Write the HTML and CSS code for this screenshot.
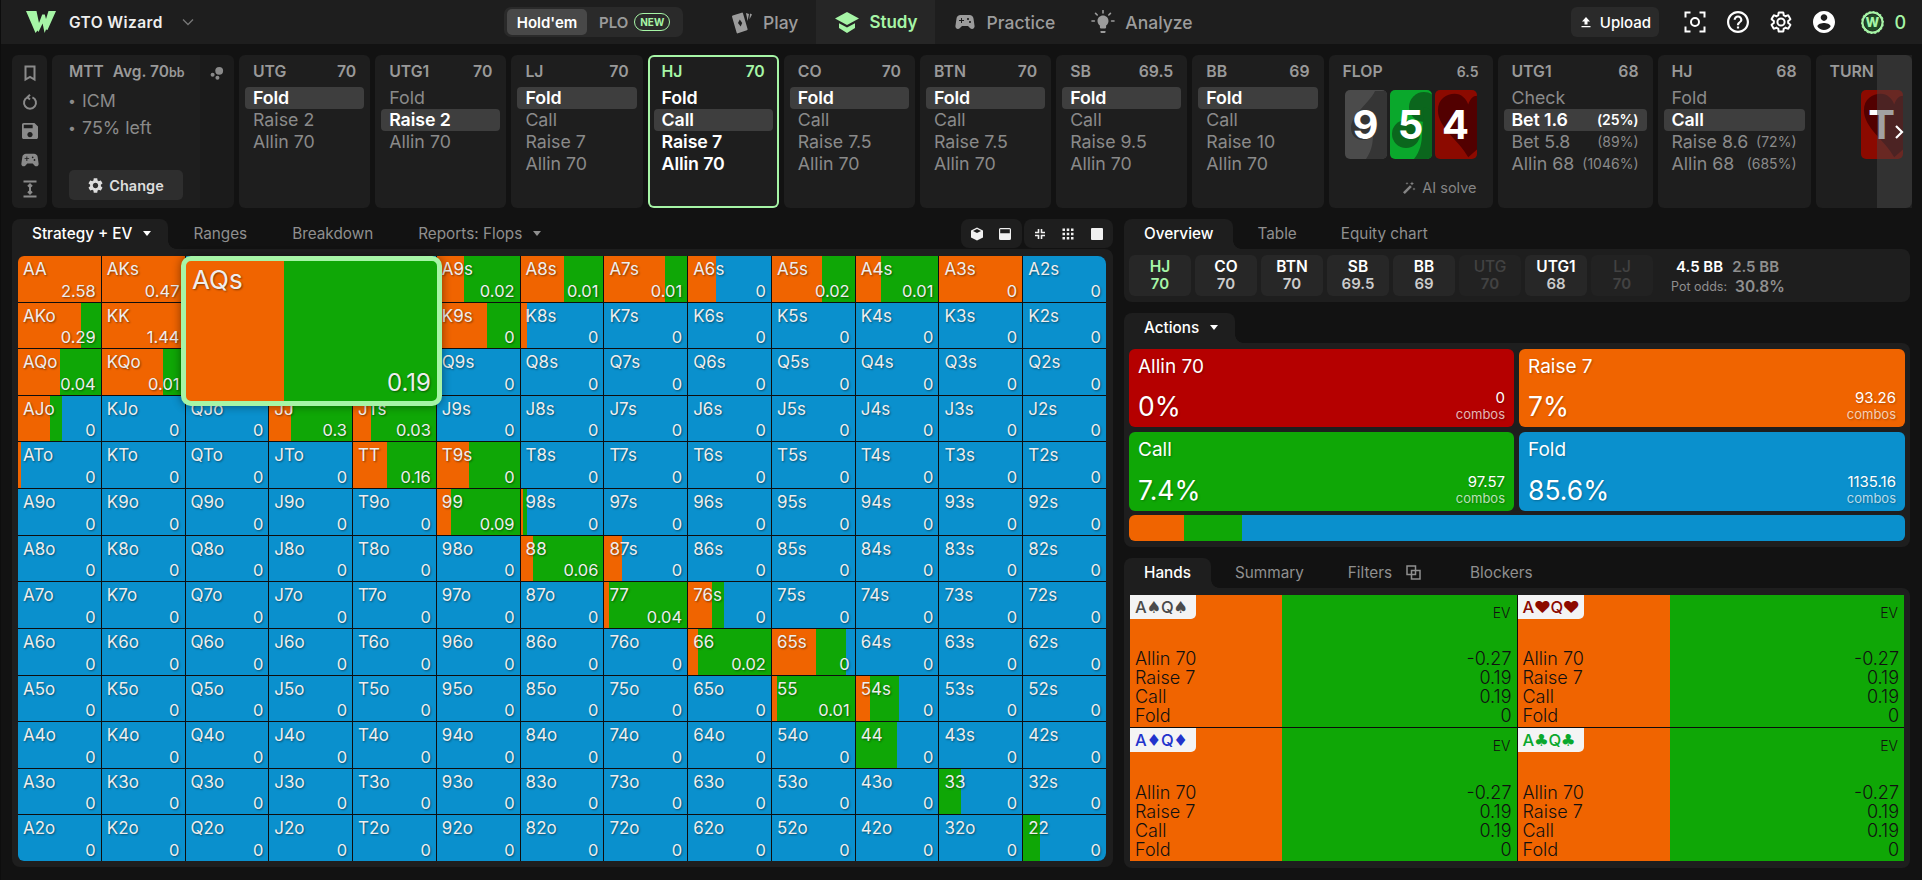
FILE: index.html
```html
<!DOCTYPE html>
<html lang="en">
<head>
<meta charset="utf-8">
<title>GTO Wizard</title>
<link rel="stylesheet" href="styles.css">
</head>
<body>
<div class="app">
  <header class="topbar">
    <svg class="logo" viewBox="0 0 30 22"><path d="M0 0H10.5L13 12 16.2 3.5H18.8L20 8 22.5 0H30L21.5 19 20 18.5 18.6 22 16.6 12.5 12.5 21 11.5 19.5 9.5 22 6.5 15Z"/></svg>
    <span class="brand">GTO Wizard</span>
    <svg class="chev" viewBox="0 0 12 8"><path d="M1 1.5 6 6.5 11 1.5"/></svg>
    <div class="toggle">
      <span class="toggle-on">Hold'em</span>
      <span class="toggle-off">PLO</span>
      <span class="new">NEW</span>
    </div>
    <nav class="nav">
      <a class="nav-item">
        <svg class="nav-ico" viewBox="0 0 24 24"><path d="M4 6.5 13 3.6 17.6 19.4 8.6 22.4Z" stroke-linejoin="round" stroke="currentColor" stroke-width="2"/><path d="M17 3 20 4 18.6 11Z" /><path d="M21 3.4 23 4.4 20.4 9.5Z"/><path class="nav-hole" d="M10.8 9.5 13.2 13 11.7 16.6 9 13Z"/></svg>
        <span>Play</span>
      </a>
      <a class="nav-item nav-on">
        <svg class="nav-ico study-ico" viewBox="0 0 26 24"><path d="M13 2 25 8.5 13 15 1 8.5Z"/><path d="M5 13.2 13 17.6 21 13.2V18L13 23 5 18Z"/></svg>
        <span>Study</span>
      </a>
      <a class="nav-item">
        <svg class="nav-ico pad-ico" viewBox="0 0 24 24"><path d="M21.58 16.09l-1.09-7.66C20.21 6.46 18.52 5 16.53 5H7.47C5.48 5 3.79 6.46 3.51 8.43l-1.09 7.66C2.2 17.63 3.39 19 4.94 19c.68 0 1.32-.27 1.8-.75L9 16h6l2.25 2.25c.48.48 1.13.75 1.8.75 1.56 0 2.75-1.37 2.53-2.91zM11 11H9v2H8v-2H6v-1h2V8h1v2h2v1zm4-1c-.55 0-1-.45-1-1s.45-1 1-1 1 .45 1 1-.45 1-1 1zm2 3c-.55 0-1-.45-1-1s.45-1 1-1 1 .45 1 1-.45 1-1 1z"/></svg>
        <span>Practice</span>
      </a>
      <a class="nav-item">
        <svg class="nav-ico" viewBox="0 0 24 24"><path d="M9.5 21h5v1.2c0 .5-.4.8-.8.8h-3.4c-.5 0-.8-.3-.8-.8zM12 5.5c-3 0-5.5 2.4-5.5 5.4 0 1.9 1 3.5 2.4 4.5v2.2c0 .5.4.8.8.8h4.6c.5 0 .8-.3.8-.8v-2.2c1.5-1 2.4-2.6 2.4-4.5 0-3-2.5-5.4-5.5-5.4z"/><path class="ray" d="M12 .6V3M4.6 3.4 6.2 5M19.4 3.4 17.8 5M1 11H3.4M20.6 11H23"/></svg>
        <span>Analyze</span>
      </a>
    </nav>
    <div class="top-right">
      <a class="upload">
        <svg class="up-ico" viewBox="0 0 12 12"><path d="M6 1 10 5.5H7.5V8.5H4.5V5.5H2ZM1.5 10H10.5V11.3H1.5Z"/></svg>
        Upload
      </a>
      <svg class="top-ico" viewBox="0 0 22 22"><path class="ico-line" d="M1.5 6.5V1.5H6.5M15.5 1.5H20.5V6.5M1.5 15.5V20.5H6.5M15.5 20.5H20.5V15.5"/><circle class="ico-line" cx="11" cy="11" r="4"/></svg>
      <svg class="top-ico" viewBox="2 2 20 20"><path d="M11 18h2v-2h-2v2zm1-16C6.48 2 2 6.48 2 12s4.48 10 10 10 10-4.48 10-10S17.52 2 12 2zm0 18c-4.41 0-8-3.59-8-8s3.59-8 8-8 8 3.59 8 8-3.59 8-8 8zm0-14c-2.21 0-4 1.79-4 4h2c0-1.1.9-2 2-2s2 .9 2 2c0 2-3 1.75-3 5h2c0-2.25 3-2.5 3-5 0-2.21-1.79-4-4-4z"/></svg>
      <svg class="top-ico" viewBox="1 1 22 22"><path class="ico-line" d="M19.14 12.94c.04-.3.06-.61.06-.94 0-.32-.02-.64-.07-.94l2.03-1.58c.18-.14.23-.41.12-.61l-1.92-3.32c-.12-.22-.37-.29-.59-.22l-2.39.96c-.5-.38-1.03-.7-1.62-.94l-.36-2.54c-.04-.24-.24-.41-.48-.41h-3.84c-.24 0-.43.17-.47.41l-.36 2.54c-.59.24-1.13.57-1.62.94l-2.39-.96c-.22-.08-.47 0-.59.22L2.74 8.87c-.12.21-.08.47.12.61l2.03 1.58c-.05.3-.09.63-.09.94s.02.64.07.94l-2.03 1.58c-.18.14-.23.41-.12.61l1.92 3.32c.12.22.37.29.59.22l2.39-.96c.5.38 1.03.7 1.62.94l.36 2.54c.05.24.24.41.48.41h3.84c.24 0 .44-.17.47-.41l.36-2.54c.59-.24 1.13-.56 1.62-.94l2.39.96c.22.08.47 0 .59-.22l1.92-3.32c.12-.22.07-.47-.12-.61l-2.01-1.58zM12 15.6c-1.98 0-3.6-1.62-3.6-3.6s1.62-3.6 3.6-3.6 3.6 1.62 3.6 3.6-1.62 3.6-3.6 3.6z"/></svg>
      <svg class="top-ico" viewBox="2 2 20 20"><path d="M12 2C6.48 2 2 6.48 2 12s4.48 10 10 10 10-4.48 10-10S17.52 2 12 2zm0 3c1.66 0 3 1.34 3 3s-1.34 3-3 3-3-1.34-3-3 1.34-3 3-3zm0 14.2c-2.5 0-4.71-1.28-6-3.22.03-1.99 4-3.08 6-3.08 1.99 0 5.97 1.09 6 3.08-1.29 1.94-3.5 3.22-6 3.22z"/></svg>
      <svg class="coin" viewBox="0 0 25 25"><circle class="coin-edge" cx="12.5" cy="12.5" r="11.5"/><circle class="coin-mid" cx="12.5" cy="12.5" r="8.5"/><text class="coin-w" x="12.5" y="17">W</text></svg>
      <span class="coin-n">0</span>
    </div>
  </header>

  <section class="strip">
    <div class="tools">
      <svg class="tool" viewBox="0 0 16 16"><path class="ico-line" d="M3.5 1.5H12.5V14.5L8 12 3.5 14.5Z"/></svg>
      <svg class="tool" viewBox="0 0 16 16"><path class="ico-line" d="M5.6 3.3A6 6 0 1 0 10.4 3.3M8 .8 5.4 3.3 8 5.6"/></svg>
      <svg class="tool" viewBox="3 3 18 18"><path d="M17 3H5c-1.11 0-2 .9-2 2v14c0 1.1.89 2 2 2h14c1.1 0 2-.9 2-2V7l-4-4zm-5 16c-1.66 0-3-1.34-3-3s1.34-3 3-3 3 1.34 3 3-1.34 3-3 3zm3-10H5V5h10v4z"/></svg>
      <svg class="tool tool-w" viewBox="2 4 20 16"><path d="M21.58 16.09l-1.09-7.66C20.21 6.46 18.52 5 16.53 5H7.47C5.48 5 3.79 6.46 3.51 8.43l-1.09 7.66C2.2 17.63 3.39 19 4.94 19c.68 0 1.32-.27 1.8-.75L9 16h6l2.25 2.25c.48.48 1.13.75 1.8.75 1.56 0 2.75-1.37 2.53-2.91zM11 11H9v2H8v-2H6v-1h2V8h1v2h2v1zm4-1c-.55 0-1-.45-1-1s.45-1 1-1 1 .45 1 1-.45 1-1 1zm2 3c-.55 0-1-.45-1-1s.45-1 1-1 1 .45 1 1-.45 1-1 1z"/></svg>
      <svg class="tool" viewBox="0 0 16 18"><path class="ico-line" d="M1.5 1.5H14.5M1.5 16.5H14.5M8 4.5V13.5M6 6.5 8 4.5 10 6.5M6 11.5 8 13.5 10 11.5"/></svg>
    </div>

    <div class="mtt">
      <div class="mtt-main">
        <div class="mtt-head"><span>MTT</span><span>Avg. 70<small>bb</small></span></div>
        <ul class="mtt-list"><li>ICM</li><li>75% left</li></ul>
        <a class="change">
          <svg class="change-ico" viewBox="2 2 20 20"><path d="M19.14 12.94c.04-.3.06-.61.06-.94 0-.32-.02-.64-.07-.94l2.03-1.58c.18-.14.23-.41.12-.61l-1.92-3.32c-.12-.22-.37-.29-.59-.22l-2.39.96c-.5-.38-1.03-.7-1.62-.94l-.36-2.54c-.04-.24-.24-.41-.48-.41h-3.84c-.24 0-.43.17-.47.41l-.36 2.54c-.59.24-1.13.57-1.62.94l-2.39-.96c-.22-.08-.47 0-.59.22L2.74 8.87c-.12.21-.08.47.12.61l2.03 1.58c-.05.3-.09.63-.09.94s.02.64.07.94l-2.03 1.58c-.18.14-.23.41-.12.61l1.92 3.32c.12.22.37.29.59.22l2.39-.96c.5.38 1.03.7 1.62.94l.36 2.54c.05.24.24.41.48.41h3.84c.24 0 .44-.17.47-.41l.36-2.54c.59-.24 1.13-.56 1.62-.94l2.39.96c.22.08.47 0 .59-.22l1.92-3.32c.12-.22.07-.47-.12-.61l-2.01-1.58zM12 15.6c-1.98 0-3.6-1.62-3.6-3.6s1.62-3.6 3.6-3.6 3.6 1.62 3.6 3.6-1.62 3.6-3.6 3.6z"/></svg>
          Change
        </a>
      </div>
      <div class="mtt-side">
        <svg class="dots" viewBox="0 0 16 16"><circle cx="10.5" cy="5.5" r="4.5"/><circle cx="3" cy="10" r="2.3"/><circle cx="8.5" cy="13.5" r="2.3"/></svg>
      </div>
    </div>

    <div class="seat">
      <div class="seat-h"><span>UTG</span><span>70</span></div>
      <div class="opt sel">Fold</div><div class="opt">Raise 2</div><div class="opt">Allin 70</div>
    </div>
    <div class="seat">
      <div class="seat-h"><span>UTG1</span><span>70</span></div>
      <div class="opt">Fold</div><div class="opt sel">Raise 2</div><div class="opt">Allin 70</div>
    </div>
    <div class="seat">
      <div class="seat-h"><span>LJ</span><span>70</span></div>
      <div class="opt sel">Fold</div><div class="opt">Call</div><div class="opt">Raise 7</div><div class="opt">Allin 70</div>
    </div>
    <div class="seat seat-on">
      <div class="seat-h"><span>HJ</span><span>70</span></div>
      <div class="opt">Fold</div><div class="opt sel">Call</div><div class="opt">Raise 7</div><div class="opt">Allin 70</div>
    </div>
    <div class="seat">
      <div class="seat-h"><span>CO</span><span>70</span></div>
      <div class="opt sel">Fold</div><div class="opt">Call</div><div class="opt">Raise 7.5</div><div class="opt">Allin 70</div>
    </div>
    <div class="seat">
      <div class="seat-h"><span>BTN</span><span>70</span></div>
      <div class="opt sel">Fold</div><div class="opt">Call</div><div class="opt">Raise 7.5</div><div class="opt">Allin 70</div>
    </div>
    <div class="seat">
      <div class="seat-h"><span>SB</span><span>69.5</span></div>
      <div class="opt sel">Fold</div><div class="opt">Call</div><div class="opt">Raise 9.5</div><div class="opt">Allin 70</div>
    </div>
    <div class="seat">
      <div class="seat-h"><span>BB</span><span>69</span></div>
      <div class="opt sel">Fold</div><div class="opt">Call</div><div class="opt">Raise 10</div><div class="opt">Allin 70</div>
    </div>

    <div class="seat flop">
      <div class="seat-h"><span>FLOP</span><span class="flop-pot">6.5</span></div>
      <div class="board">
        <div class="pcard pc-s">
          <svg viewBox="0 0 42 69"><path d="M30 1C24 14 6 24 6 38C6 47 13 50 18 50C22 50 26 48 28 45C28 54 26 62 21 69H42V1Z"/></svg>
          <b>9</b>
        </div>
        <div class="pcard pc-c">
          <svg viewBox="0 0 42 69"><circle cx="34" cy="17" r="15"/><circle cx="16" cy="44" r="14"/><path d="M34 17 42 20V69H24C30 62 32 52 32 44Z"/></svg>
          <b>5</b>
        </div>
        <div class="pcard pc-h">
          <svg viewBox="0 0 43 69"><path d="M34 68C24 50 3 38 3 20C3 8 12 3 20 3C27 3 32 8 34 14C36 8 39 5 43 5V60Z"/></svg>
          <b>4</b>
        </div>
      </div>
      <div class="ai">
        <svg class="ai-ico" viewBox="0 0 14 14"><path d="M1 11.2 8 4.2 9.8 6 2.8 13Z"/><path d="M10 .5 10.6 2 12 2.6 10.6 3.2 10 4.6 9.4 3.2 8 2.6 9.4 2ZM5 .8 5.4 2 6.6 2.4 5.4 2.8 5 4 4.6 2.8 3.4 2.4 4.6 2ZM12 6.5 12.4 7.6 13.6 8 12.4 8.4 12 9.5 11.6 8.4 10.4 8 11.6 7.6Z"/></svg>
        AI solve
      </div>
    </div>

    <div class="seat seat-utg1">
      <div class="seat-h"><span>UTG1</span><span>68</span></div>
      <div class="opt">Check</div>
      <div class="opt sel"><span>Bet 1.6</span><em>(25%)</em></div>
      <div class="opt"><span>Bet 5.8</span><em>(89%)</em></div>
      <div class="opt"><span>Allin 68</span><em>(1046%)</em></div>
    </div>
    <div class="seat seat-hj2">
      <div class="seat-h"><span>HJ</span><span>68</span></div>
      <div class="opt">Fold</div>
      <div class="opt sel">Call</div>
      <div class="opt"><span>Raise 8.6</span><em>(72%)</em></div>
      <div class="opt"><span>Allin 68</span><em>(685%)</em></div>
    </div>
    <div class="seat turn">
      <div class="seat-h"><span>TURN</span></div>
      <div class="board board-turn">
        <div class="pcard pc-h">
          <svg viewBox="0 0 43 69"><path d="M34 68C24 50 3 38 3 20C3 8 12 3 20 3C27 3 32 8 34 14C36 8 39 5 43 5V60Z"/></svg>
          <b>T</b>
        </div>
      </div>
    </div>
    <div class="more"><svg viewBox="0 0 10 16"><path d="M2 2 8 8 2 14"/></svg></div>
  </section>

  <main class="content">
    <section class="left">
      <div class="tabs">
        <a class="tab tab-on tab-caret">Strategy + EV<i class="caret"></i></a>
        <a class="tab">Ranges</a>
        <a class="tab">Breakdown</a>
        <a class="tab">Reports: Flops<i class="caret caret-dim"></i></a>
        <div class="view-tools">
          <div class="vgroup">
            <a class="vbtn"><svg viewBox="0 0 14 14"><path d="M7 .5 13 3.5V10.5L7 13.5 1 10.5V3.5ZM3 4 7 6 11 4 7 2Z" fill-rule="evenodd"/></svg></a>
            <a class="vbtn"><svg viewBox="0 0 14 14"><path d="M2.5 1H11.5A1.5 1.5 0 0 1 13 2.5V11.5A1.5 1.5 0 0 1 11.5 13H2.5A1.5 1.5 0 0 1 1 11.5V2.5A1.5 1.5 0 0 1 2.5 1ZM2.2 2.2V6.2H11.8V2.2Z" fill-rule="evenodd"/></svg></a>
          </div>
          <div class="vgroup">
            <a class="vbtn"><svg class="thin" viewBox="0 0 14 14"><path class="ico-line" d="M5.5 2V5.5H2M8.5 2V5.5H12M5.5 12V8.5H2M8.5 12V8.5H12"/></svg></a>
            <a class="vbtn"><svg viewBox="0 0 14 14"><path d="M1.5 1.5H4V4H1.5ZM5.75 1.5H8.25V4H5.75ZM10 1.5H12.5V4H10ZM1.5 5.75H4V8.25H1.5ZM5.75 5.75H8.25V8.25H5.75ZM10 5.75H12.5V8.25H10ZM1.5 10H4V12.5H1.5ZM5.75 10H8.25V12.5H5.75ZM10 10H12.5V12.5H10Z"/></svg></a>
            <a class="vbtn"><svg viewBox="0 0 14 14"><rect x="1" y="1" width="12" height="12" rx="1"/></svg></a>
          </div>
        </div>
      </div>
      <div class="panel panel-grid">
        <div class="matrix">
          <div class="grid">
            <div class="c or"><b>AA</b><span>2.58</span></div>
            <div class="c or"><b>AKs</b><span>0.47</span></div>
            <div class="c"></div>
            <div class="c"></div>
            <div class="c"></div>
            <div class="c" style="--o:33%;--g:100%"><b>A9s</b><span>0.02</span></div>
            <div class="c" style="--o:52%;--g:100%"><b>A8s</b><span>0.01</span></div>
            <div class="c" style="--o:74%;--g:100%"><b>A7s</b><span>0.01</span></div>
            <div class="c" style="--o:34%;--g:34%"><b>A6s</b><span>0</span></div>
            <div class="c" style="--o:60%;--g:100%"><b>A5s</b><span>0.02</span></div>
            <div class="c" style="--o:30%;--g:100%"><b>A4s</b><span>0.01</span></div>
            <div class="c or"><b>A3s</b><span>0</span></div>
            <div class="c"><b>A2s</b><span>0</span></div>

            <div class="c" style="--o:76%;--g:100%"><b>AKo</b><span>0.29</span></div>
            <div class="c or"><b>KK</b><span>1.44</span></div>
            <div class="c"></div>
            <div class="c"></div>
            <div class="c"></div>
            <div class="c" style="--o:60%;--g:100%"><b>K9s</b><span>0</span></div>
            <div class="c" style="--o:7%;--g:7%"><b>K8s</b><span>0</span></div>
            <div class="c"><b>K7s</b><span>0</span></div>
            <div class="c"><b>K6s</b><span>0</span></div>
            <div class="c"><b>K5s</b><span>0</span></div>
            <div class="c"><b>K4s</b><span>0</span></div>
            <div class="c"><b>K3s</b><span>0</span></div>
            <div class="c"><b>K2s</b><span>0</span></div>

            <div class="c" style="--o:50%;--g:100%"><b>AQo</b><span>0.04</span></div>
            <div class="c" style="--o:74%;--g:100%"><b>KQo</b><span>0.01</span></div>
            <div class="c"></div>
            <div class="c"></div>
            <div class="c"></div>
            <div class="c"><b>Q9s</b><span>0</span></div>
            <div class="c"><b>Q8s</b><span>0</span></div>
            <div class="c"><b>Q7s</b><span>0</span></div>
            <div class="c"><b>Q6s</b><span>0</span></div>
            <div class="c"><b>Q5s</b><span>0</span></div>
            <div class="c"><b>Q4s</b><span>0</span></div>
            <div class="c"><b>Q3s</b><span>0</span></div>
            <div class="c"><b>Q2s</b><span>0</span></div>

            <div class="c" style="--o:38%;--g:53%"><b>AJo</b><span>0</span></div>
            <div class="c"><b>KJo</b><span>0</span></div>
            <div class="c"><b>QJo</b><span>0</span></div>
            <div class="c" style="--o:26%;--g:100%"><b>JJ</b><span>0.3</span></div>
            <div class="c" style="--o:22%;--g:100%"><b>JTs</b><span>0.03</span></div>
            <div class="c"><b>J9s</b><span>0</span></div>
            <div class="c"><b>J8s</b><span>0</span></div>
            <div class="c"><b>J7s</b><span>0</span></div>
            <div class="c"><b>J6s</b><span>0</span></div>
            <div class="c"><b>J5s</b><span>0</span></div>
            <div class="c"><b>J4s</b><span>0</span></div>
            <div class="c"><b>J3s</b><span>0</span></div>
            <div class="c"><b>J2s</b><span>0</span></div>

            <div class="c" style="--o:4%;--g:4%"><b>ATo</b><span>0</span></div>
            <div class="c"><b>KTo</b><span>0</span></div>
            <div class="c"><b>QTo</b><span>0</span></div>
            <div class="c"><b>JTo</b><span>0</span></div>
            <div class="c" style="--o:41%;--g:100%"><b>TT</b><span>0.16</span></div>
            <div class="c" style="--o:38%;--g:100%"><b>T9s</b><span>0</span></div>
            <div class="c"><b>T8s</b><span>0</span></div>
            <div class="c"><b>T7s</b><span>0</span></div>
            <div class="c"><b>T6s</b><span>0</span></div>
            <div class="c"><b>T5s</b><span>0</span></div>
            <div class="c"><b>T4s</b><span>0</span></div>
            <div class="c"><b>T3s</b><span>0</span></div>
            <div class="c"><b>T2s</b><span>0</span></div>

            <div class="c"><b>A9o</b><span>0</span></div>
            <div class="c"><b>K9o</b><span>0</span></div>
            <div class="c"><b>Q9o</b><span>0</span></div>
            <div class="c"><b>J9o</b><span>0</span></div>
            <div class="c"><b>T9o</b><span>0</span></div>
            <div class="c" style="--o:17%;--g:100%"><b>99</b><span>0.09</span></div>
            <div class="c" style="--o:3%;--g:7%"><b>98s</b><span>0</span></div>
            <div class="c"><b>97s</b><span>0</span></div>
            <div class="c"><b>96s</b><span>0</span></div>
            <div class="c"><b>95s</b><span>0</span></div>
            <div class="c"><b>94s</b><span>0</span></div>
            <div class="c"><b>93s</b><span>0</span></div>
            <div class="c"><b>92s</b><span>0</span></div>

            <div class="c"><b>A8o</b><span>0</span></div>
            <div class="c"><b>K8o</b><span>0</span></div>
            <div class="c"><b>Q8o</b><span>0</span></div>
            <div class="c"><b>J8o</b><span>0</span></div>
            <div class="c"><b>T8o</b><span>0</span></div>
            <div class="c"><b>98o</b><span>0</span></div>
            <div class="c" style="--o:15%;--g:100%"><b>88</b><span>0.06</span></div>
            <div class="c" style="--o:22%;--g:22%"><b>87s</b><span>0</span></div>
            <div class="c"><b>86s</b><span>0</span></div>
            <div class="c"><b>85s</b><span>0</span></div>
            <div class="c"><b>84s</b><span>0</span></div>
            <div class="c"><b>83s</b><span>0</span></div>
            <div class="c"><b>82s</b><span>0</span></div>

            <div class="c"><b>A7o</b><span>0</span></div>
            <div class="c"><b>K7o</b><span>0</span></div>
            <div class="c"><b>Q7o</b><span>0</span></div>
            <div class="c"><b>J7o</b><span>0</span></div>
            <div class="c"><b>T7o</b><span>0</span></div>
            <div class="c"><b>97o</b><span>0</span></div>
            <div class="c"><b>87o</b><span>0</span></div>
            <div class="c" style="--o:6%;--g:100%"><b>77</b><span>0.04</span></div>
            <div class="c" style="--o:29%;--g:43%"><b>76s</b><span>0</span></div>
            <div class="c"><b>75s</b><span>0</span></div>
            <div class="c"><b>74s</b><span>0</span></div>
            <div class="c"><b>73s</b><span>0</span></div>
            <div class="c"><b>72s</b><span>0</span></div>

            <div class="c"><b>A6o</b><span>0</span></div>
            <div class="c"><b>K6o</b><span>0</span></div>
            <div class="c"><b>Q6o</b><span>0</span></div>
            <div class="c"><b>J6o</b><span>0</span></div>
            <div class="c"><b>T6o</b><span>0</span></div>
            <div class="c"><b>96o</b><span>0</span></div>
            <div class="c"><b>86o</b><span>0</span></div>
            <div class="c"><b>76o</b><span>0</span></div>
            <div class="c" style="--o:12%;--g:100%"><b>66</b><span>0.02</span></div>
            <div class="c" style="--o:53%;--g:89%"><b>65s</b><span>0</span></div>
            <div class="c"><b>64s</b><span>0</span></div>
            <div class="c"><b>63s</b><span>0</span></div>
            <div class="c"><b>62s</b><span>0</span></div>

            <div class="c"><b>A5o</b><span>0</span></div>
            <div class="c"><b>K5o</b><span>0</span></div>
            <div class="c"><b>Q5o</b><span>0</span></div>
            <div class="c"><b>J5o</b><span>0</span></div>
            <div class="c"><b>T5o</b><span>0</span></div>
            <div class="c"><b>95o</b><span>0</span></div>
            <div class="c"><b>85o</b><span>0</span></div>
            <div class="c"><b>75o</b><span>0</span></div>
            <div class="c"><b>65o</b><span>0</span></div>
            <div class="c" style="--o:6%;--g:100%"><b>55</b><span>0.01</span></div>
            <div class="c" style="--o:17%;--g:53%"><b>54s</b><span>0</span></div>
            <div class="c"><b>53s</b><span>0</span></div>
            <div class="c"><b>52s</b><span>0</span></div>

            <div class="c"><b>A4o</b><span>0</span></div>
            <div class="c"><b>K4o</b><span>0</span></div>
            <div class="c"><b>Q4o</b><span>0</span></div>
            <div class="c"><b>J4o</b><span>0</span></div>
            <div class="c"><b>T4o</b><span>0</span></div>
            <div class="c"><b>94o</b><span>0</span></div>
            <div class="c"><b>84o</b><span>0</span></div>
            <div class="c"><b>74o</b><span>0</span></div>
            <div class="c"><b>64o</b><span>0</span></div>
            <div class="c"><b>54o</b><span>0</span></div>
            <div class="c" style="--o:0%;--g:50%"><b>44</b><span>0</span></div>
            <div class="c"><b>43s</b><span>0</span></div>
            <div class="c"><b>42s</b><span>0</span></div>

            <div class="c"><b>A3o</b><span>0</span></div>
            <div class="c"><b>K3o</b><span>0</span></div>
            <div class="c"><b>Q3o</b><span>0</span></div>
            <div class="c"><b>J3o</b><span>0</span></div>
            <div class="c"><b>T3o</b><span>0</span></div>
            <div class="c"><b>93o</b><span>0</span></div>
            <div class="c"><b>83o</b><span>0</span></div>
            <div class="c"><b>73o</b><span>0</span></div>
            <div class="c"><b>63o</b><span>0</span></div>
            <div class="c"><b>53o</b><span>0</span></div>
            <div class="c"><b>43o</b><span>0</span></div>
            <div class="c" style="--o:0%;--g:27%"><b>33</b><span>0</span></div>
            <div class="c"><b>32s</b><span>0</span></div>

            <div class="c"><b>A2o</b><span>0</span></div>
            <div class="c"><b>K2o</b><span>0</span></div>
            <div class="c"><b>Q2o</b><span>0</span></div>
            <div class="c"><b>J2o</b><span>0</span></div>
            <div class="c"><b>T2o</b><span>0</span></div>
            <div class="c"><b>92o</b><span>0</span></div>
            <div class="c"><b>82o</b><span>0</span></div>
            <div class="c"><b>72o</b><span>0</span></div>
            <div class="c"><b>62o</b><span>0</span></div>
            <div class="c"><b>52o</b><span>0</span></div>
            <div class="c"><b>42o</b><span>0</span></div>
            <div class="c"><b>32o</b><span>0</span></div>
            <div class="c" style="--o:0%;--g:21%"><b>22</b><span>0</span></div>
          </div>
          <div class="zoomed"><b>AQs</b><span>0.19</span></div>
        </div>
      </div>
    </section>

    <section class="right">
      <div class="tabs tabs-r">
        <a class="tab tab-on">Overview</a>
        <a class="tab">Table</a>
        <a class="tab">Equity chart</a>
      </div>
      <div class="panel panel-pos">
        <div class="pos pos-on"><b>HJ</b><span>70</span></div>
        <div class="pos"><b>CO</b><span>70</span></div>
        <div class="pos"><b>BTN</b><span>70</span></div>
        <div class="pos"><b>SB</b><span>69.5</span></div>
        <div class="pos"><b>BB</b><span>69</span></div>
        <div class="pos pos-off"><b>UTG</b><span>70</span></div>
        <div class="pos"><b>UTG1</b><span>68</span></div>
        <div class="pos pos-off"><b>LJ</b><span>70</span></div>
        <div class="pot">
          <div class="pot-a"><b>4.5 BB</b><span>2.5 BB</span></div>
          <div class="pot-b"><small>Pot odds:</small><span>30.8%</span></div>
        </div>
      </div>

      <div class="tabs tabs-r tabs-gap">
        <a class="tab tab-on tab-caret">Actions<i class="caret"></i></a>
      </div>
      <div class="panel panel-act">
        <div class="acts">
          <div class="act act-r"><div class="act-t">Allin 70</div><div class="act-b"><strong>0%</strong><div class="act-c"><span>0</span><small>combos</small></div></div></div>
          <div class="act act-o"><div class="act-t">Raise 7</div><div class="act-b"><strong>7%</strong><div class="act-c"><span>93.26</span><small>combos</small></div></div></div>
          <div class="act act-g"><div class="act-t">Call</div><div class="act-b"><strong>7.4%</strong><div class="act-c"><span>97.57</span><small>combos</small></div></div></div>
          <div class="act act-bl"><div class="act-t">Fold</div><div class="act-b"><strong>85.6%</strong><div class="act-c"><span>1135.16</span><small>combos</small></div></div></div>
        </div>
        <div class="bar"></div>
      </div>

      <div class="tabs tabs-r tabs-gap">
        <a class="tab tab-on">Hands</a>
        <a class="tab">Summary</a>
        <a class="tab tab-filters">Filters<svg class="copy" viewBox="0 0 15 15"><path class="ico-line" d="M1 1H9.5V9.5H1ZM5.5 5.5H14V14H5.5Z"/></svg></a>
        <a class="tab">Blockers</a>
      </div>
      <div class="panel panel-hands">
        <div class="hands">
          <div class="hand">
            <div class="hand-h"><span class="htag s-s">A♠Q♠</span><span class="ev">EV</span></div>
            <dl class="rows"><div><dt>Allin 70</dt><dd>-0.27</dd></div><div><dt>Raise 7</dt><dd>0.19</dd></div><div><dt>Call</dt><dd>0.19</dd></div><div><dt>Fold</dt><dd>0</dd></div></dl>
          </div>
          <div class="hand">
            <div class="hand-h"><span class="htag s-h">A♥Q♥</span><span class="ev">EV</span></div>
            <dl class="rows"><div><dt>Allin 70</dt><dd>-0.27</dd></div><div><dt>Raise 7</dt><dd>0.19</dd></div><div><dt>Call</dt><dd>0.19</dd></div><div><dt>Fold</dt><dd>0</dd></div></dl>
          </div>
          <div class="hand">
            <div class="hand-h"><span class="htag s-d">A♦Q♦</span><span class="ev">EV</span></div>
            <dl class="rows"><div><dt>Allin 70</dt><dd>-0.27</dd></div><div><dt>Raise 7</dt><dd>0.19</dd></div><div><dt>Call</dt><dd>0.19</dd></div><div><dt>Fold</dt><dd>0</dd></div></dl>
          </div>
          <div class="hand">
            <div class="hand-h"><span class="htag s-c">A♣Q♣</span><span class="ev">EV</span></div>
            <dl class="rows"><div><dt>Allin 70</dt><dd>-0.27</dd></div><div><dt>Raise 7</dt><dd>0.19</dd></div><div><dt>Call</dt><dd>0.19</dd></div><div><dt>Fold</dt><dd>0</dd></div></dl>
          </div>
        </div>
      </div>
    </section>
  </main>
</div>
</body>
</html>
```

FILE: styles.css
```css
:root {
  --bg: #121212;
  --card: #1e1e1e;
  --mint: #a6f5a6;
  --or: #f06400;
  --gr: #0fa706;
  --bl: #0a90cd;
  --rd: #b50000;
}
* { box-sizing: border-box; }
html, body { margin: 0; height: 100%; }
body {
  background: var(--bg);
  color: #fff;
  font-family: Inter, "Noto Sans", "DejaVu Sans", sans-serif;
  overflow: hidden;
}
a { color: inherit; text-decoration: none; }
svg { display: block; flex: none; }
.ico-line { fill: none; stroke: currentColor; stroke-width: 2; }

.app { width: 1922px; height: 880px; border-left: 1px solid #0d0d0d; display: flex; flex-direction: column; }

/* top bar */
.topbar { height: 44px; flex: none; background: #1e1e1e; display: flex; align-items: center; padding-left: 25px; }
.logo { width: 30px; height: 22px; fill: var(--mint); }
.brand { margin-left: 13px; width: 96px; font-size: 15.5px; font-weight: 600; color: #eee; letter-spacing: .4px; white-space: nowrap; }
.chev { width: 12px; height: 8px; margin-left: 17px; fill: none; stroke: #777; stroke-width: 1.3; }
.toggle { margin-left: 310px; width: 179px; height: 30px; background: #2a2a2a; border-radius: 7px; display: flex; align-items: center; padding: 0 3px; font-size: 15px; font-weight: 600; }
.toggle-on { width: 80px; height: 26px; background: #484848; border-radius: 5px; display: flex; align-items: center; justify-content: center; color: #fff; }
.toggle-off { margin-left: 12px; color: #9a9a9a; }
.new { margin-left: 6px; width: 36px; height: 18px; border: 1px solid var(--mint); border-radius: 9px; color: var(--mint); font-size: 10px; font-weight: 700; display: flex; align-items: center; justify-content: center; }
.nav { margin-left: 28px; display: flex; height: 44px; align-self: stretch; }
.nav-item { display: flex; align-items: center; gap: 10px; padding: 0 18px; font-size: 17.5px; font-weight: 500; color: #9c9c9c; }
.nav-ico { width: 24px; height: 24px; fill: currentColor; }
.nav-hole { fill: #1e1e1e; }
.ray { fill: none; stroke: currentColor; stroke-width: 1.6; stroke-linecap: round; }
.nav-on { background: #262626; color: var(--mint); font-weight: 600; padding-right: 17px; }
.nav-on span { font-size: 17px; }
.study-ico { width: 26px; margin-right: -1px; }
.top-right { margin-left: auto; display: flex; align-items: center; padding-right: 16px; }
.upload { width: 88px; height: 30px; background: #2a2a2a; border-radius: 6px; display: flex; align-items: center; justify-content: center; gap: 8px; font-size: 15px; font-weight: 500; color: #fff; margin-right: 25px; }
.up-ico { width: 12px; height: 12px; fill: #fff; }
.top-ico { width: 22px; height: 22px; margin-right: 21px; fill: #fff; color: #fff; }
.coin { width: 25px; height: 25px; margin-left: 4px; }
.coin-edge { fill: var(--mint); stroke: #1e1e1e; stroke-width: 1; stroke-dasharray: 2 2; }
.coin-mid { fill: #1e4a26; stroke: #1e1e1e; }
.coin-w { fill: var(--mint); font-size: 13px; font-weight: 800; text-anchor: middle; }
.coin-n { margin-left: 9px; font-size: 18px; font-weight: 500; color: var(--mint); }

/* street strip */
.strip { position: relative; margin: 11px 10px 0 11px; height: 153px; flex: none; display: flex; gap: 5px; overflow: hidden; }
.tools { width: 35px; flex: none; background: var(--card); border-radius: 6px; padding-top: 3px; display: flex; flex-direction: column; align-items: center; color: #8a8a8a; }
.tool { width: 16px; height: 18px; margin: 6px 0 5px; fill: #8a8a8a; color: #8a8a8a; }
.tool-w { width: 18px; }
.mtt { width: 182px; flex: none; display: flex; border-radius: 6px; overflow: hidden; }
.mtt-main { width: 148px; background: var(--card); padding: 8px 0 8px 17px; display: flex; flex-direction: column; }
.mtt-side { flex: 1; background: #1b1b1b; padding-top: 11px; display: flex; justify-content: center; }
.mtt-head { display: flex; gap: 9px; height: 18px; line-height: 18px; font-size: 15.5px; font-weight: 600; color: #999; white-space: nowrap; }
.mtt-head small { font-size: 12.5px; }
.mtt-list { list-style: none; margin: 6px 0 0; padding: 0 0 0 13px; font-size: 17.8px; color: #8a8a8a; }
.mtt-list li { height: 27px; line-height: 27px; position: relative; }
.mtt-list li::before { content: "•"; position: absolute; left: -14px; font-size: 14px; }
.change { margin-top: auto; width: 114px; height: 30px; background: #2e2e2e; border-radius: 5px; display: flex; align-items: center; justify-content: center; gap: 6px; font-size: 14.5px; font-weight: 600; color: #ddd; }
.change-ico { width: 15px; height: 15px; fill: #ddd; }
.dots { width: 14px; height: 14px; fill: #8a8a8a; }

.seat { width: 131.2px; flex: none; background: var(--card); border-radius: 6px; padding: 8px 0; color: #8a8a8a; }
.seat-h { display: flex; justify-content: space-between; height: 24px; line-height: 18px; padding: 0 14px; font-size: 15.8px; font-weight: 600; color: #999; }
.opt { height: 22px; line-height: 22px; margin: 0 6px; padding: 0 8px; border-radius: 4px; display: flex; justify-content: space-between; white-space: nowrap; font-size: 17.8px; }
.opt em { font-style: normal; font-size: 14px; font-weight: 400; }
.sel { background: #3e3e3e; color: #fff; font-weight: 600; letter-spacing: -.1px; }
.sel em { font-weight: 600; }
.seat-on { box-shadow: inset 0 0 0 2px var(--mint); color: #fff; }
.seat-on .seat-h { color: var(--mint); }
.seat-on .opt { font-weight: 600; letter-spacing: -.1px; }
.seat-utg1 { width: 155px; }
.seat-hj2 { width: 153px; }
.flop { width: 164px; display: flex; flex-direction: column; }
.flop-pot { font-size: 14px; }
.board { display: flex; gap: 3px; padding-left: 16px; margin-top: 3px; }
.pcard { position: relative; width: 42px; height: 69px; border-radius: 5px; overflow: hidden; display: flex; align-items: center; justify-content: center; }
.pcard svg { position: absolute; inset: 0; width: 100%; height: 100%; }
.pcard b { position: relative; font-size: 40px; font-weight: 700; color: #fff; }
.pc-s { background: #4b4b4b; } .pc-s svg { fill: #353535; }
.pc-c { background: #0aa82c; } .pc-c svg { fill: #0b661d; }
.pc-h { background: #8c0a00; } .pc-h svg { fill: #520000; }
.ai { margin-top: auto; padding: 0 16px 4px 0; display: flex; justify-content: flex-end; align-items: center; gap: 6px; font-size: 14.5px; color: #858585; }
.ai-ico { width: 14px; height: 14px; fill: #858585; }
.turn { width: 160px; }
.board-turn { padding-left: 45px; }
.more { position: absolute; right: 0; top: 0; bottom: 0; width: 35px; background: rgba(70,70,70,.5); border-radius: 0 6px 6px 0; display: flex; align-items: center; justify-content: flex-end; padding-right: 8px; }
.more svg { width: 10px; height: 16px; fill: none; stroke: #fff; stroke-width: 2.2; }

/* content */
.content { margin-top: 11px; padding: 0 11px 0 11px; display: flex; gap: 11px; flex: 1; }
.left { width: 1101px; flex: none; display: flex; flex-direction: column; }
.right { width: 786px; flex: none; display: flex; flex-direction: column; }

.tabs { display: flex; gap: 5px; height: 30px; flex: none; font-size: 15.3px; color: #8f8f8f; }
.tabs-r { gap: 4px; }
.tabs-gap { margin-top: 11px; }
.tab { position: relative; display: flex; align-items: center; padding: 0 20px 1px; border-radius: 8px 8px 0 0; white-space: nowrap; }
.tab-on { background: var(--card); color: #fff; font-weight: 500; }
.tab-on::after { content: ""; position: absolute; right: -8px; bottom: 0; width: 8px; height: 8px; background: radial-gradient(circle at 100% 0, transparent 7.5px, var(--card) 8px); }
.tab-caret { padding-right: 17px; }
.caret { margin-left: 11px; width: 0; height: 0; border: 4.5px solid transparent; border-top: 5px solid #fff; border-bottom: 0; }
.caret-dim { border-top-color: #8f8f8f; }
.tab-filters { padding-right: 25px; }
.copy { width: 15px; height: 15px; margin-left: 14px; color: #8f8f8f; }
.copy .ico-line { stroke-width: 1.5; }

.view-tools { margin-left: auto; display: flex; gap: 2px; height: 29px; }
.vgroup { background: var(--card); border-radius: 8px; display: flex; padding: 0 2px; align-items: center; }
.vbtn { width: 28.5px; display: flex; justify-content: center; color: #f0f0f0; }
.vbtn svg { width: 14px; height: 14px; fill: #f0f0f0; }
.vbtn .thin .ico-line { stroke-width: 1.6; }

.panel { background: var(--card); border-radius: 0 8px 8px 8px; }
.panel-grid { flex: none; height: 618px; padding: 7px 7px 6px 6px; }
.matrix { position: relative; height: 605px; }
.grid { height: 100%; display: grid; grid-template-columns: repeat(13, minmax(0, 1fr)); grid-template-rows: repeat(13, minmax(0, 1fr)); gap: 1px; background: #0e0e0e; border-radius: 6px 8px 8px 6px; overflow: hidden; }
.c { --o: 0%; --g: 0%; display: flex; flex-direction: column; justify-content: space-between; padding: 3px 5px 1px; min-width: 0; overflow: hidden;
  background: linear-gradient(90deg, var(--or) var(--o), var(--gr) var(--o), var(--gr) var(--g), var(--bl) var(--g));
  font-size: 16.5px; line-height: 20px; color: #eee; text-shadow: 1px 1px 2px rgba(0,0,0,.45); }
.c.or { background: var(--or); }
.c b { font-weight: 400; font-size: 17px; }
.c span { text-align: right; }
.zoomed { position: absolute; left: 163px; top: 0; width: 261px; height: 150px; border: 5px solid var(--mint); border-radius: 10px; padding: 3px 6px 2px 6px; display: flex; flex-direction: column; justify-content: space-between;
  background: linear-gradient(90deg, var(--or) 39%, var(--gr) 39%);
  box-shadow: 0 0 10px rgba(0,0,0,.45); font-size: 24px; line-height: 32px; color: #eee; text-shadow: 1px 1px 2px rgba(0,0,0,.45); }
.zoomed b { font-weight: 400; font-size: 26px; }
.zoomed span { text-align: right; }

.panel-pos { height: 53px; padding: 6px 5px; display: flex; gap: 4px; }
.pos { width: 62px; height: 41px; background: #272727; border-radius: 6px; display: flex; flex-direction: column; align-items: center; justify-content: center; font-size: 15px; line-height: 18px; font-weight: 600; color: #ccc; }
.pos b { color: #fff; font-weight: 600; font-size: 15.5px; margin-bottom: -1px; }
.pos-on b, .pos-on span { color: var(--mint); }
.pos-off { background: #222; color: #424242; }
.pos-off b { color: #424242; font-weight: 500; }
.pot { margin-left: 14px; font-size: 15px; font-weight: 600; color: #8f8f8f; display: flex; flex-direction: column; gap: 2px; padding-top: 3px; }
.pot-a { display: flex; gap: 9px; padding-left: 5px; line-height: 18px; }
.pot-a b { color: #fff; font-weight: 600; }
.pot-b { display: flex; align-items: center; gap: 8px; line-height: 18px; }
.pot-b small { font-size: 12.5px; font-weight: 400; }
.pot-b span { font-size: 15.5px; }

.panel-act { height: 204px; padding: 6px 5px; }
.acts { display: grid; grid-template-columns: 385px 386px; grid-template-rows: 78px 79px; gap: 5px; }
.act { border-radius: 6px; padding: 6px 9px 6px 9px; display: flex; flex-direction: column; justify-content: space-between; text-shadow: 1px 1px 2px rgba(0,0,0,.25); }
.act-r { background: var(--rd); } .act-o { background: var(--or); } .act-g { background: var(--gr); } .act-bl { background: var(--bl); }
.act-t { font-size: 19px; line-height: 24px; }
.act-b { display: flex; justify-content: space-between; align-items: flex-end; }
.act-b strong { font-size: 26.5px; font-weight: 400; line-height: 30px; }
.act-c { display: flex; flex-direction: column; align-items: flex-end; font-size: 15px; line-height: 16px; margin-bottom: -1px; }
.act-c small { font-size: 13px; color: rgba(255,255,255,.72); }
.bar { margin-top: 4px; height: 26px; border-radius: 6px; background: linear-gradient(90deg, var(--or) 7.1%, var(--gr) 7.1%, var(--gr) 14.5%, var(--bl) 14.5%); }

.panel-hands { height: 280px; padding: 7px 6px; }
.hands { height: 266px; display: grid; grid-template-columns: 1fr 1fr; grid-template-rows: 132px 133px; gap: 1px; background: #0c0c0c; }
.hand { display: flex; flex-direction: column; background: linear-gradient(90deg, var(--or) 39.3%, var(--gr) 39.3%); color: #101010; overflow: hidden; }
.hand-h { display: flex; justify-content: space-between; align-items: flex-start; padding-right: 6px; }
.htag { width: 66px; height: 24px; background: #f4f4f4; border-radius: 0 0 5px 0; padding-left: 5px; font-size: 16.5px; font-weight: 500; letter-spacing: -.3px; line-height: 24px; font-family: Inter, "DejaVu Sans", sans-serif; white-space: nowrap; }
.s-s { color: #4a4a4a; } .s-h { color: #8c0a00; } .s-d { color: #2233cc; } .s-c { color: #0aa82c; }
.ev { margin-top: 9px; font-size: 14px; font-weight: 300; line-height: 18px; }
.rows { margin: auto 0 0; padding: 0 5px 2px; font-size: 18px; font-weight: 300; line-height: 19px; }
.rows div { display: flex; justify-content: space-between; }
.rows dt, .rows dd { margin: 0; }
```
